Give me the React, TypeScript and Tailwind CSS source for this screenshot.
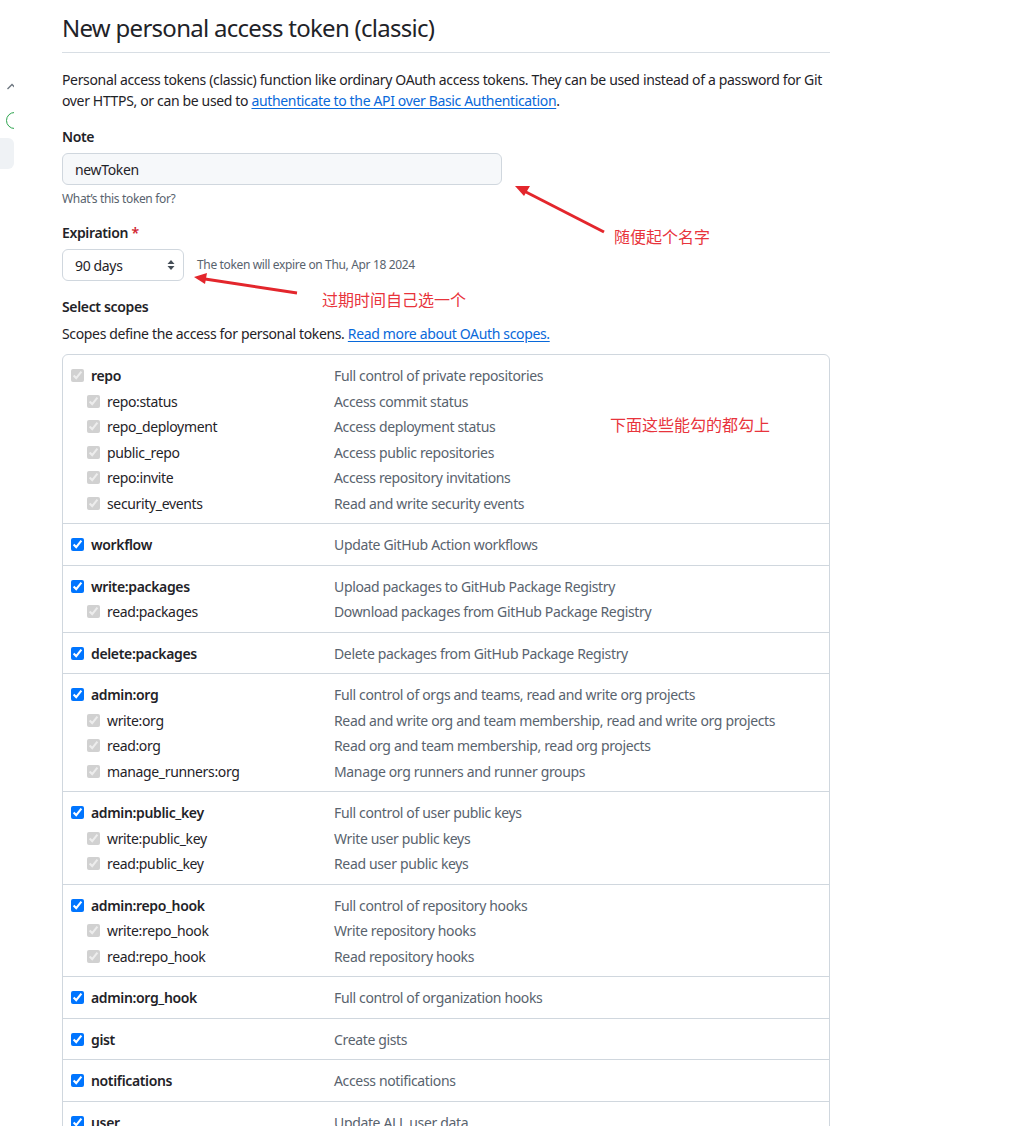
import React from "react";

type Scope = { name: string; desc: string; children?: { name: string; desc: string }[]; disabled?: boolean };

const groups: Scope[] = [
  {
    name: "repo",
    desc: "Full control of private repositories",
    disabled: true,
    children: [
      { name: "repo:status", desc: "Access commit status" },
      { name: "repo_deployment", desc: "Access deployment status" },
      { name: "public_repo", desc: "Access public repositories" },
      { name: "repo:invite", desc: "Access repository invitations" },
      { name: "security_events", desc: "Read and write security events" },
    ],
  },
  { name: "workflow", desc: "Update GitHub Action workflows" },
  {
    name: "write:packages",
    desc: "Upload packages to GitHub Package Registry",
    children: [{ name: "read:packages", desc: "Download packages from GitHub Package Registry" }],
  },
  { name: "delete:packages", desc: "Delete packages from GitHub Package Registry" },
  {
    name: "admin:org",
    desc: "Full control of orgs and teams, read and write org projects",
    children: [
      { name: "write:org", desc: "Read and write org and team membership, read and write org projects" },
      { name: "read:org", desc: "Read org and team membership, read org projects" },
      { name: "manage_runners:org", desc: "Manage org runners and runner groups" },
    ],
  },
  {
    name: "admin:public_key",
    desc: "Full control of user public keys",
    children: [
      { name: "write:public_key", desc: "Write user public keys" },
      { name: "read:public_key", desc: "Read user public keys" },
    ],
  },
  {
    name: "admin:repo_hook",
    desc: "Full control of repository hooks",
    children: [
      { name: "write:repo_hook", desc: "Write repository hooks" },
      { name: "read:repo_hook", desc: "Read repository hooks" },
    ],
  },
  { name: "admin:org_hook", desc: "Full control of organization hooks" },
  { name: "gist", desc: "Create gists" },
  { name: "notifications", desc: "Access notifications" },
  {
    name: "user",
    desc: "Update ALL user data",
    children: [
      { name: "read:user", desc: "Read ALL user profile data" },
      { name: "user:email", desc: "Access user email addresses (read-only)" },
      { name: "user:follow", desc: "Follow and unfollow users" },
    ],
  },
];

function Row({ name, desc, top, disabled }: { name: string; desc: string; top: boolean; disabled: boolean }) {
  return (
    <div className="flex items-center h-[25.5px] pt-[1px]">
      <div className={`flex items-center w-[263px] shrink-0 ${top ? "" : "pl-[16px]"}`}>
        <input
          type="checkbox"
          defaultChecked
          disabled={disabled}
          className="m-0 w-[13px] h-[13px] shrink-0"
        />
        <span className={`ml-[7px] text-[#1f2328] ${top ? "font-semibold" : ""}`}>{name}</span>
      </div>
      <span className="text-[#59636e]">{desc}</span>
    </div>
  );
}

export default function App() {
  return (
    <div
      className="relative w-[1027px] h-[1126px] overflow-hidden bg-white text-[14px] leading-[21px] tracking-[-0.025em] text-[#1f2328]"
      style={{ fontFamily: '"Segoe UI", "Noto Sans", "Noto Sans CJK SC", sans-serif' }}
    >
      <div className="flex">
        {/* clipped sidebar */}
        <div className="w-[14px] shrink-0 overflow-hidden">
          <div className="w-[200px] ml-[-186px] flex flex-col items-end">
            <div className="h-[82px]" />
            <svg width="12" height="9" viewBox="0 0 12 9" className="mr-[-4px]">
              <path d="M1.5 7 L6 2.5 L10.5 7" fill="none" stroke="#6e7781" strokeWidth="1.4" />
            </svg>
            <div className="h-[21px]" />
            <div className="w-[17px] h-[17px] rounded-full border-[1.5px] border-[#2da44e] mr-[-9px]" />
            <div className="h-[9px]" />
            <div className="w-[60px] h-[31px] rounded-[6px] bg-[#eff2f5]" />
          </div>
        </div>

        <div className="ml-[48px] w-[768px]">
          <div className="pt-[10px] pb-[6px] border-b border-[#d8dee4]">
            <h1 className="text-[24px] leading-[36px] font-normal tracking-[-0.03em]">New personal access token (classic)</h1>
          </div>
          <p className="mt-[16px]">
            Personal access tokens (classic) function like ordinary OAuth access tokens. They can be used instead of a password for Git
            over HTTPS, or can be used to{" "}
            <a className="text-[#0969da] underline underline-offset-[2px]">authenticate to the API over Basic Authentication</a>.
          </p>

          <div className="mt-[15px]">
            <div className="font-semibold">Note</div>
            <div className="mt-[6px] w-[440px] h-[32px] rounded-[6px] border border-[#d0d7de] bg-[#f6f8fa] flex items-center px-[12px]">
              newToken
            </div>
            <div className="mt-[5px] text-[12px] leading-[18px] text-[#59636e]">What’s this token for?</div>
          </div>

          <div className="mt-[14px]">
            <div className="font-semibold">
              Expiration <span className="text-[#d1242f]">*</span>
            </div>
            <div className="mt-[6px] flex items-center">
              <div className="w-[122px] h-[32px] rounded-[6px] border border-[#d0d7de] bg-white flex items-center justify-between pl-[12px] pr-[8px]">
                <span>90 days</span>
                <svg width="8" height="12" viewBox="0 0 8 12">
                  <path d="M4 1 L7.5 5 L0.5 5 Z" fill="#444d56" />
                  <path d="M4 11 L7.5 7 L0.5 7 Z" fill="#444d56" />
                </svg>
              </div>
              <span className="ml-[13px] text-[12px] leading-[18px] text-[#59636e]">The token will expire on Thu, Apr 18 2024</span>
            </div>
          </div>

          <div className="mt-[15px]">
            <div className="font-semibold">Select scopes</div>
            <div className="mt-[6px]">
              Scopes define the access for personal tokens.{" "}
              <a className="text-[#0969da] underline underline-offset-[2px]">Read more about OAuth scopes.</a>
            </div>
          </div>

          <div className="mt-[10px] border border-[#d0d7de] rounded-[6px]">
            {groups.map((g, i) => (
              <div key={g.name} className={`py-[7.5px] pl-[8px] ${i > 0 ? "border-t border-[#d0d7de]" : ""}`}>
                <Row name={g.name} desc={g.desc} top disabled={!!g.disabled} />
                {g.children?.map((c) => (
                  <Row key={c.name} name={c.name} desc={c.desc} top={false} disabled />
                ))}
              </div>
            ))}
          </div>
        </div>
      </div>

      {/* annotations */}
      <svg className="absolute left-0 top-0 pointer-events-none" width="1027" height="1126">
        <line x1="604" y1="232" x2="524" y2="191" stroke="#e3262c" strokeWidth="3" />
        <path d="M515 186 L530 186 L524 196 Z" fill="#e3262c" />
        <line x1="297" y1="293" x2="205" y2="279" stroke="#e3262c" strokeWidth="3" />
        <path d="M194 277 L207 273 L205 284 Z" fill="#e3262c" />
      </svg>
      <div
        className="absolute left-[614px] top-[225px] text-[16px] leading-[22px] tracking-normal text-[#e8343c]"
        style={{ fontFamily: '"Noto Sans CJK SC", sans-serif' }}
      >
        随便起个名字
      </div>
      <div
        className="absolute left-[322px] top-[288px] text-[16px] leading-[22px] tracking-normal text-[#e8343c]"
        style={{ fontFamily: '"Noto Sans CJK SC", sans-serif' }}
      >
        过期时间自己选一个
      </div>
      <div
        className="absolute left-[610px] top-[413px] text-[16px] leading-[22px] tracking-normal text-[#e8343c]"
        style={{ fontFamily: '"Noto Sans CJK SC", sans-serif' }}
      >
        下面这些能勾的都勾上
      </div>
    </div>
  );
}
